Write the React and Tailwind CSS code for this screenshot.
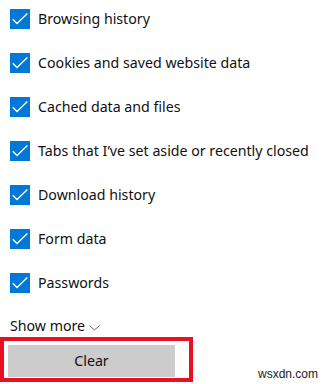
import React from "react";

const items = [
  "Browsing history",
  "Cookies and saved website data",
  "Cached data and files",
  "Tabs that I\u2019ve set aside or recently closed",
  "Download history",
  "Form data",
  "Passwords",
];

function Check() {
  return (
    <div className="w-5 h-5 bg-[#0078d7] shrink-0">
      <svg width="20" height="20" viewBox="0 0 20 20">
        <polyline points="2.8,10.2 7,14.6 17.4,4.6" fill="none" stroke="#fff" strokeWidth="1.4" />
      </svg>
    </div>
  );
}

export default function App() {
  return (
    <div className="w-[331px] h-[384px] bg-white relative overflow-hidden text-[#111]" style={{ fontFamily: '"Noto Sans", "Open Sans", sans-serif' }}>
      <div className="flex flex-col">
        {items.map((t) => (
          <div key={t} className="h-[44px] pt-[9px] pl-[10px]">
            <div className="flex items-center h-5 gap-[8px]">
              <Check />
              <span className="text-[14.2px] leading-5 whitespace-nowrap">{t}</span>
            </div>
          </div>
        ))}
        <div className="h-[29px] pl-[10px] pt-[8px] flex items-start">
          <span className="text-[14.2px] leading-5 whitespace-nowrap">Show more</span>
          <svg className="ml-[4px] mt-[9px]" width="11" height="6" viewBox="0 0 11 6">
            <polyline points="0.5,0.5 5.5,5 10.5,0.5" fill="none" stroke="#555" strokeWidth="0.9" />
          </svg>
        </div>
        <div className="w-[193px] h-[45px] border-4 border-[#e81123] pl-[4px] pt-[4px]">
          <div className="w-[167px] h-[32px] bg-[#cccccc] flex items-center justify-center text-[14.2px]">Clear</div>
        </div>
      </div>
      <div className="absolute left-[258px] top-[365px] text-[12px] text-[#222]" style={{ fontFamily: '"Liberation Sans", Arial, sans-serif' }}>wsxdn.com</div>
    </div>
  );
}
